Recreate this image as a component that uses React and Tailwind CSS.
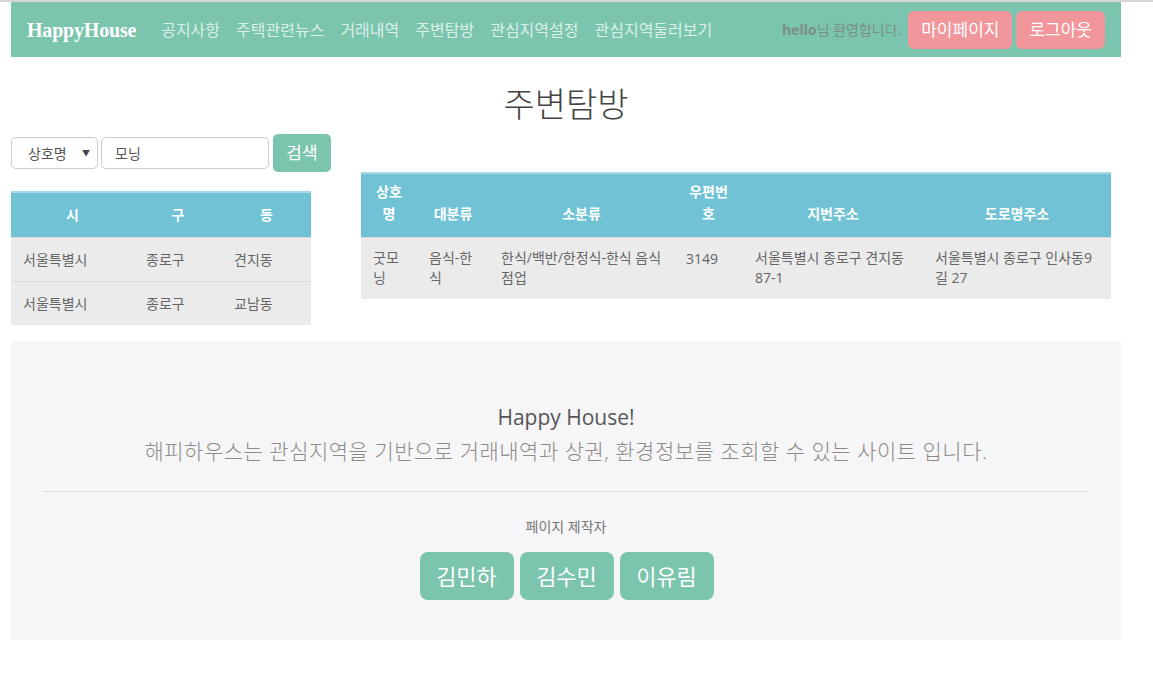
const NAV = ["공지사항", "주택관련뉴스", "거래내역", "주변탐방", "관심지역설정", "관심지역둘러보기"];

const AREAS = [
  { si: "서울특별시", gu: "종로구", dong: "견지동" },
  { si: "서울특별시", gu: "종로구", dong: "교남동" },
];

const STORES = [
  {
    name: "굿모닝",
    big: "음식-한식",
    small: "한식/백반/한정식-한식 음식점업",
    zip: "3149",
    jibun: "서울특별시 종로구 견지동 87-1",
    road: "서울특별시 종로구 인사동9길 27",
  },
];

const font = { fontFamily: '"Open Sans", "Noto Sans CJK KR", sans-serif' };

export default function App() {
  return (
    <div className="w-[1153px] h-[685px] bg-white border-t-2 border-[#d6d6d6] overflow-hidden" style={font}>
      <div className="ml-[11px] w-[1110px]">
        {/* Top Navbar */}
        <nav className="h-[55px] bg-[#7bc4ad] flex items-center pl-4 pr-4">
          <span className="text-white font-bold text-[20px] tracking-[-0.2px] mr-[25px]" style={{ fontFamily: '"Liberation Serif", serif' }}>
            HappyHouse
          </span>
          <div className="flex gap-[16px] text-[16px] text-[#dcf0ea]">
            {NAV.map((n) => (
              <span key={n}>{n}</span>
            ))}
          </div>
          <div className="ml-auto flex items-center gap-1">
            <span className="text-[14px] text-[#7b8e86] mr-[3px]">
              <b>hello</b>님 환영합니다.
            </span>
            <button className="h-[38px] px-[13px] rounded-[6px] bg-[#f1969a] text-white text-[17px]">마이페이지</button>
            <button className="h-[38px] px-[13px] rounded-[6px] bg-[#f1969a] text-white text-[17px]">로그아웃</button>
          </div>
        </nav>

        {/* Title */}
        <h1 className="text-center text-[34px] font-light text-[#444] mt-[25px] leading-[45px]">주변탐방</h1>

        <div className="flex gap-[50px]">
          {/* Left column */}
          <div className="w-[300px] shrink-0">
            <div className="flex items-center gap-[3px] h-[38px] mt-[7px]">
              <div className="shrink-0 w-[87px] h-[32px] border border-[#ccc] rounded-[5px] flex items-center justify-between pl-[16px] pr-[7px] text-[14px] text-[#555]">
                <span>상호명</span>
                <span className="text-[8px] text-[#444]">▼</span>
              </div>
              <div className="shrink-0 w-[168px] h-[32px] border border-[#ccc] rounded-[5px] flex items-center pl-[13px] text-[14px] text-[#555]">모닝</div>
              <button className="shrink-0 w-[58px] h-[38px] rounded-[5px] bg-[#7bc4ad] text-white text-[17px] ml-[1px]">검색</button>
            </div>

            <table className="w-[300px] mt-[19px] text-[14px] border-collapse">
              <thead>
                <tr className="bg-[#70c2d4] h-[45px] text-white border-t-2 border-[#a6d9e4]">
                  <th className="w-[123px] font-bold">시</th>
                  <th className="w-[88px] font-bold">구</th>
                  <th className="font-bold">동</th>
                </tr>
              </thead>
              <tbody>
                {AREAS.map((a, i) => (
                  <tr key={i} className="bg-[#ebebeb] h-[44px] text-[#666] border-t border-[#dcdcdc]">
                    <td className="px-3">{a.si}</td>
                    <td className="px-3">{a.gu}</td>
                    <td className="px-3">{a.dong}</td>
                  </tr>
                ))}
              </tbody>
            </table>
          </div>

          {/* Right column */}
          <div className="w-[750px] shrink-0 pt-[45px]">
            <table className="w-[750px] text-[14px] border-collapse table-fixed">
              <thead>
                <tr className="bg-[#70c2d4] h-[64px] text-white border-t-2 border-[#a6d9e4]">
                  <th className="w-[56px] px-3 pb-[12px] align-bottom font-bold leading-[22px]">상호명</th>
                  <th className="w-[72px] px-3 pb-[12px] align-bottom font-bold leading-[22px]">대분류</th>
                  <th className="w-[185px] px-3 pb-[12px] align-bottom font-bold leading-[22px]">소분류</th>
                  <th className="w-[69px] px-3 pb-[12px] align-bottom font-bold leading-[22px]">우편번호</th>
                  <th className="w-[180px] px-3 pb-[12px] align-bottom font-bold leading-[22px]">지번주소</th>
                  <th className="px-3 pb-[12px] align-bottom font-bold leading-[22px]">도로명주소</th>
                </tr>
              </thead>
              <tbody>
                {STORES.map((s, i) => (
                  <tr key={i} className="bg-[#ebebeb] h-[62px] text-[#666] leading-[20px] border-t border-[#dcdcdc]">
                    <td className="px-3">{s.name}</td>
                    <td className="px-3">{s.big}</td>
                    <td className="px-3">{s.small}</td>
                    <td className="px-3 align-top pt-[11px]">{s.zip}</td>
                    <td className="px-3">{s.jibun}</td>
                    <td className="px-3">{s.road}</td>
                  </tr>
                ))}
              </tbody>
            </table>
          </div>
        </div>

        {/* Footer */}
        <footer className="mt-[16px] h-[299px] bg-[#f6f6f8] px-[32px] pt-[62px] text-center">
          <p className="text-[21px] text-[#555] leading-[28px]">Happy House!</p>
          <p className="text-[21px] font-light tracking-[0.5px] text-[#8d8a86] leading-[30px] mt-[5px]">
            해피하우스는 관심지역을 기반으로 거래내역과 상권, 환경정보를 조회할 수 있는 사이트 입니다.
          </p>
          <hr className="mt-[25px] border-[#dcdcdc]" />
          <p className="mt-[24px] text-[14px] text-[#777]">페이지 제작자</p>
          <div className="flex justify-center gap-[6px] mt-[15px] pl-[1px]">
            {["김민하", "김수민", "이유림"].map((n) => (
              <button key={n} className="w-[94px] h-[48px] rounded-[8px] bg-[#7bc4ad] text-white text-[22px]">
                {n}
              </button>
            ))}
          </div>
        </footer>
      </div>
    </div>
  );
}
